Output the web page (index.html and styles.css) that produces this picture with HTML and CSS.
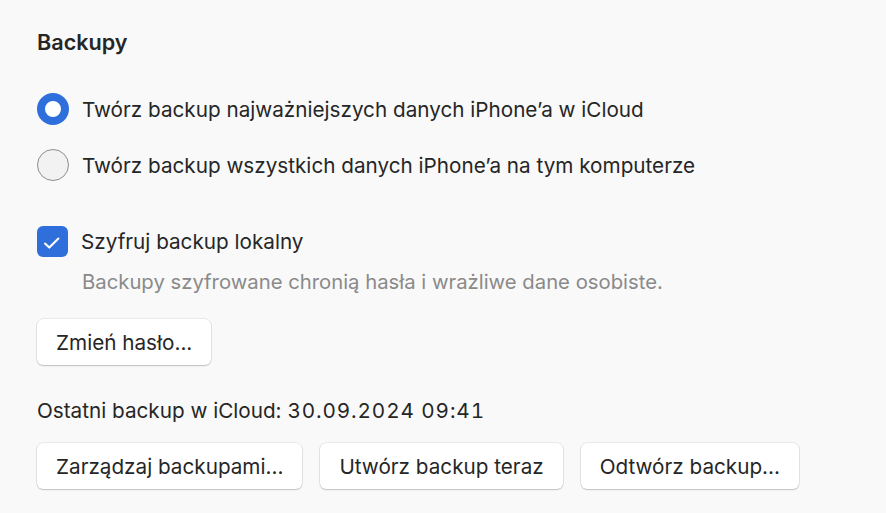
FILE: index.html
```html
<!DOCTYPE html>
<html lang="pl">
<head>
    <meta charset="UTF-8">
    <meta name="viewport" content="width=device-width, initial-scale=1.0">
    <title>Backupy</title>
    <link rel="stylesheet" href="styles.css">
</head>
<body>
    <div class="pane">
        <h2 class="title">Backupy</h2>

        <div class="options">
            <label class="row">
                <span class="radio checked"></span>
                <span>Twórz backup najważniejszych danych iPhone’a w iCloud</span>
            </label>
            <label class="row">
                <span class="radio"></span>
                <span>Twórz backup wszystkich danych iPhone’a na tym komputerze</span>
            </label>
        </div>

        <label class="row encrypt">
            <span class="checkbox">
                <svg width="31" height="31" viewBox="0 0 31 31">
                    <path d="M8 17.6 L12.3 21.6 L21.4 12.6" fill="none" stroke="#fff" stroke-width="2.1" stroke-linecap="round" stroke-linejoin="round"/>
                </svg>
            </span>
            <span>Szyfruj backup lokalny</span>
        </label>
        <p class="hint">Backupy szyfrowane chronią hasła i wrażliwe dane osobiste.</p>

        <div class="buttons first">
            <button>Zmień hasło...</button>
        </div>

        <p class="last">Ostatni backup w iCloud: <span class="num">30.09.2024 09:41</span></p>

        <div class="buttons">
            <button>Zarządzaj backupami...</button>
            <button>Utwórz backup teraz</button>
            <button>Odtwórz backup...</button>
        </div>
    </div>
</body>
</html>
```

FILE: styles.css
```css
html, body {
    margin: 0;
    background: #f9f9f9;
}

body {
    font-family: Inter, "Noto Sans", sans-serif;
    font-size: 20.7px;
    color: #262626;
}

.pane {
    padding: 30px 37px;
}

.title {
    margin: 0;
    font-size: 21.6px;
    font-weight: 600;
    line-height: 24px;
}

.options {
    margin-top: 39px;
    display: flex;
    flex-direction: column;
    gap: 24px;
}

.row {
    display: flex;
    align-items: center;
    gap: 13px;
    height: 32px;
}

.radio {
    box-sizing: border-box;
    width: 32px;
    height: 32px;
    border-radius: 50%;
    border: 1.5px solid #8e8e8e;
    background: #f2f2f2;
    flex: none;
}

.radio.checked {
    border: 8px solid #2f6fdc;
    background: #fff;
}

.encrypt {
    margin-top: 44px;
}

.checkbox {
    width: 31px;
    height: 31px;
    border-radius: 6px;
    background: #2f6fdc;
    display: flex;
    flex: none;
}

.hint {
    margin: 13px 0 0 45px;
    font-size: 20.3px;
    line-height: 24px;
    color: #8a8a8a;
}

.buttons {
    display: flex;
    gap: 18px;
    margin-top: 20px;
}

.buttons.first {
    margin-top: 25px;
}

button {
    font: inherit;
    color: #262626;
    height: 46px;
    padding: 0 19px;
    background: #fff;
    border: none;
    border-radius: 6px;
    box-shadow: 0 0 0 0.5px rgba(0, 0, 0, 0.12), 0 1px 1.5px rgba(0, 0, 0, 0.18);
}

.last {
    margin: 34px 0 0;
    line-height: 24px;
}

.num {
    font-variant-numeric: tabular-nums;
    letter-spacing: 0.9px;
}
```
